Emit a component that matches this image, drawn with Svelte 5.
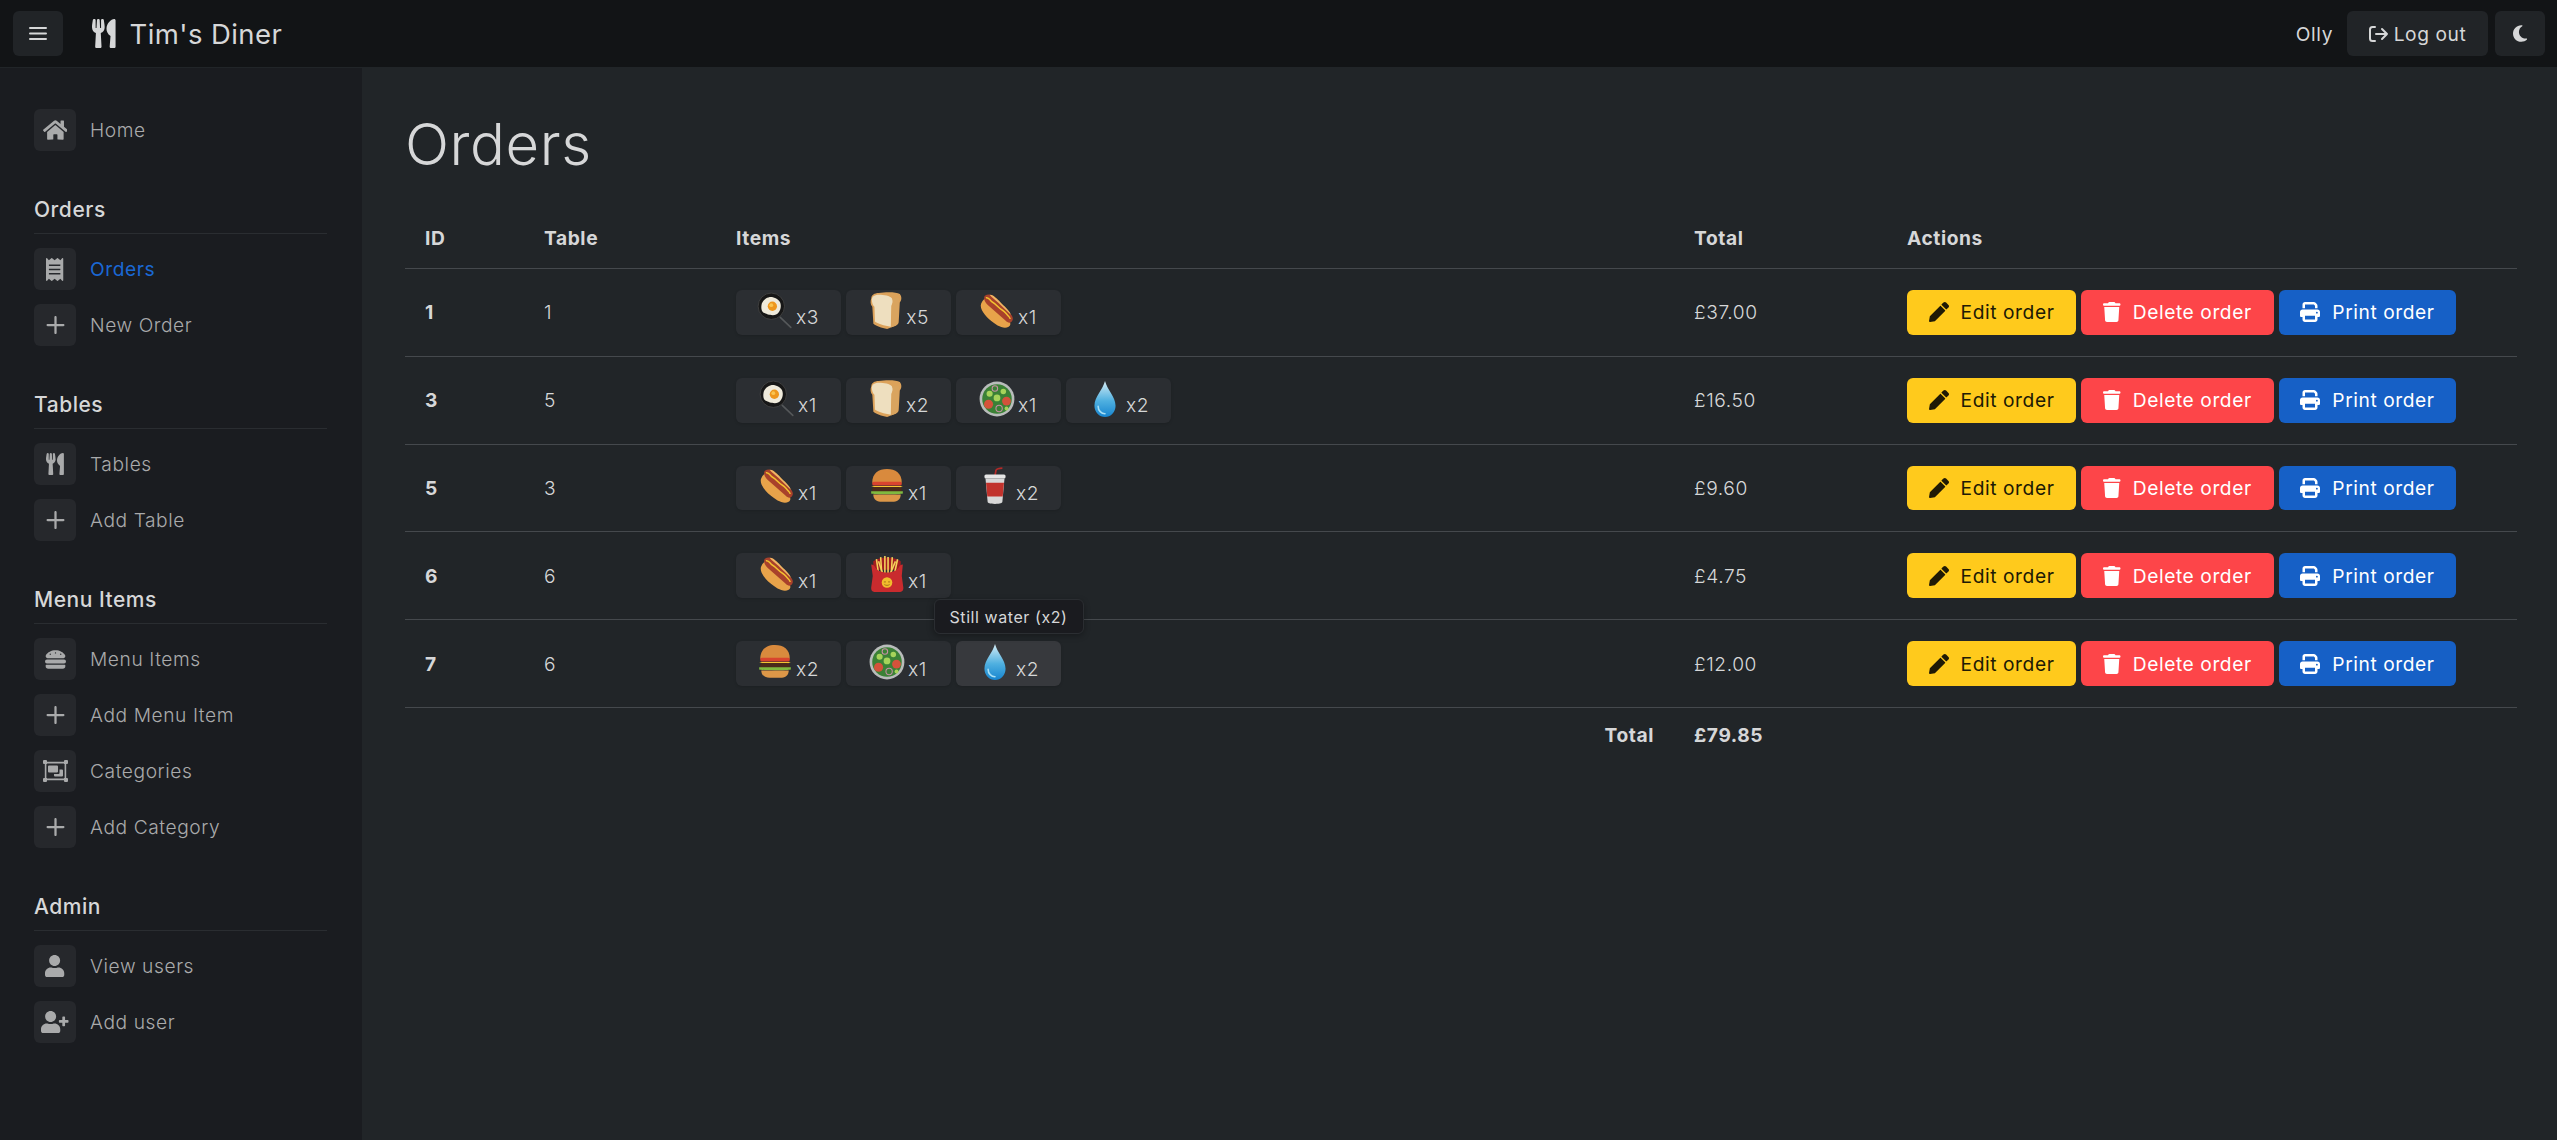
<script>
	const sections = [
		{ items: [{ label: 'Home', icon: 'home' }] },
		{
			title: 'Orders',
			items: [
				{ label: 'Orders', icon: 'receipt', active: true },
				{ label: 'New Order', icon: 'plus' }
			]
		},
		{
			title: 'Tables',
			items: [
				{ label: 'Tables', icon: 'utensils' },
				{ label: 'Add Table', icon: 'plus' }
			]
		},
		{
			title: 'Menu Items',
			items: [
				{ label: 'Menu Items', icon: 'burger' },
				{ label: 'Add Menu Item', icon: 'plus' },
				{ label: 'Categories', icon: 'group' },
				{ label: 'Add Category', icon: 'plus' }
			]
		},
		{
			title: 'Admin',
			items: [
				{ label: 'View users', icon: 'user' },
				{ label: 'Add user', icon: 'userplus' }
			]
		}
	];

	const orders = [
		{ id: 1, table: 1, total: '£37.00', items: [['egg', 3], ['bread', 5], ['hotdog', 1]] },
		{ id: 3, table: 5, total: '£16.50', items: [['egg', 1], ['bread', 2], ['salad', 1], ['water', 2]] },
		{ id: 5, table: 3, total: '£9.60', items: [['hotdog', 1], ['burger', 1], ['cup', 2]] },
		{ id: 6, table: 6, total: '£4.75', items: [['hotdog', 1], ['fries', 1]] },
		{ id: 7, table: 6, total: '£12.00', items: [['burger', 2], ['salad', 1], ['water', 2, 'Still water (x2)']] }
	];

	const iconSizes = { plus: 24, burger: 21, receipt: 23 };

	const paths = {
		home: ['0 0 576 512', 'M280.37 148.26L96 300.11V464a16 16 0 0 0 16 16l112.06-.29a16 16 0 0 0 15.92-16V368a16 16 0 0 1 16-16h64a16 16 0 0 1 16 16v95.64a16 16 0 0 0 16 16.05L464 480a16 16 0 0 0 16-16V300L295.67 148.26a12.19 12.19 0 0 0-15.3 0zM571.6 251.47L488 182.56V44.05a12 12 0 0 0-12-12h-56a12 12 0 0 0-12 12v72.61L318.47 43a48 48 0 0 0-61 0L4.34 251.47a12 12 0 0 0-1.6 16.9l25.5 31A12 12 0 0 0 45.15 301l235.22-193.74a12.19 12.19 0 0 1 15.3 0L530.9 301a12 12 0 0 0 16.9-1.6l25.5-31a12 12 0 0 0-1.7-16.93z'],
		receipt: ['0 0 384 512', 'M358.4 3.2L320 48 265.6 3.2a15.9 15.9 0 0 0-19.2 0L192 48 137.6 3.2a15.9 15.9 0 0 0-19.2 0L64 48 25.6 3.2C15-4.7 0 2.8 0 16v480c0 13.2 15 20.7 25.6 12.8L64 464l54.4 44.8a15.9 15.9 0 0 0 19.2 0L192 464l54.4 44.8a15.9 15.9 0 0 0 19.2 0L320 464l38.4 44.8c10.5 7.9 25.6.4 25.6-12.8V16c0-13.2-15-20.7-25.6-12.8zM320 360c0 4.4-3.6 8-8 8H72c-4.4 0-8-3.6-8-8v-16c0-4.4 3.6-8 8-8h240c4.4 0 8 3.6 8 8v16zm0-96c0 4.4-3.6 8-8 8H72c-4.4 0-8-3.6-8-8v-16c0-4.4 3.6-8 8-8h240c4.4 0 8 3.6 8 8v16zm0-96c0 4.4-3.6 8-8 8H72c-4.4 0-8-3.6-8-8v-16c0-4.4 3.6-8 8-8h240c4.4 0 8 3.6 8 8v16z'],
		plus: ['0 0 448 512', 'M224 64c-13 0-24 11-24 24v144H56c-13 0-24 11-24 24s11 24 24 24h144v144c0 13 11 24 24 24s24-11 24-24V280h144c13 0 24-11 24-24s-11-24-24-24H248V88c0-13-11-24-24-24z'],
		utensils: ['0 0 416 512', 'M207.9 15.2c.8 4.7 16.1 94.5 16.1 128.8 0 52.3-27.8 89.6-68.9 104.6L168 486.7c.7 13.7-10.2 25.3-24 25.3H80c-13.7 0-24.7-11.5-24-25.3l12.9-238.1C27.7 233.6 0 196.2 0 144 0 109.6 15.3 19.9 16.1 15.2 19.3-5.1 61.4-5.4 64 16.3v141.2c1.3 3.4 15.1 3.2 16 0 1.4-25.3 7.9-139.2 8-141.8 3.3-20.8 44.7-20.8 47.9 0 .2 2.7 6.6 116.5 8 141.8.9 3.2 14.8 3.4 16 0V16.3c2.6-21.6 44.8-21.4 48-1.1zm119.2 285.7l-15 185.1c-1.2 14 9.9 26 23.9 26h56c13.3 0 24-10.7 24-24V24c0-13.2-10.7-24-24-24-82.5 0-221.4 178.5-64.9 300.9z'],
		burger: ['0 0 512 512', 'M464 256H48a48 48 0 0 0 0 96h416a48 48 0 0 0 0-96zm16 128H32a16 16 0 0 0-16 16v16a64 64 0 0 0 64 64h352a64 64 0 0 0 64-64v-16a16 16 0 0 0-16-16zM58.64 224h394.72c34.57 0 54.62-43.9 34.82-75.88C448 83.2 359.55 32.1 256 32c-103.54.1-192 51.2-232.18 116.11C4 180.09 24.07 224 58.64 224zM384 112a16 16 0 1 1-16 16 16 16 0 0 1 16-16zM256 80a16 16 0 1 1-16 16 16 16 0 0 1 16-16zm-128 32a16 16 0 1 1-16 16 16 16 0 0 1 16-16z'],
		group: ['0 0 25 22', 'M0 1a1 1 0 0 1 1-1h2a1 1 0 0 1 1 1v.8h17V1a1 1 0 0 1 1-1h2a1 1 0 0 1 1 1v2a1 1 0 0 1-1 1h-.8v14h.8a1 1 0 0 1 1 1v2a1 1 0 0 1-1 1h-2a1 1 0 0 1-1-1v-.8H4v.8a1 1 0 0 1-1 1H1a1 1 0 0 1-1-1v-2a1 1 0 0 1 1-1h.8V4H1a1 1 0 0 1-1-1zm4 2.600V4h-.6v14H4v.6h17V18h.6V4H21v-.4zM6 5.500h8a1 1 0 0 1 1 1v5a1 1 0 0 1-1 1H6a1 1 0 0 1-1-1v-5a1 1 0 0 1 1-1zm10.500 4H19a1 1 0 0 1 1 1v5a1 1 0 0 1-1 1h-7a1 1 0 0 1-1-1v-1.500h4.500a1 1 0 0 0 1-1z'],
		user: ['0 0 448 512', 'M224 256c70.7 0 128-57.3 128-128S294.7 0 224 0 96 57.3 96 128s57.3 128 128 128zm89.6 32h-16.7c-22.2 10.2-46.9 16-72.9 16s-50.6-5.8-72.9-16h-16.7C60.2 288 0 348.2 0 422.4V464c0 26.5 21.5 48 48 48h352c26.5 0 48-21.5 48-48v-41.6c0-74.2-60.2-134.4-134.4-134.4z'],
		userplus: ['0 0 640 512', 'M624 208h-64v-64c0-8.8-7.2-16-16-16h-32c-8.8 0-16 7.2-16 16v64h-64c-8.8 0-16 7.2-16 16v32c0 8.8 7.2 16 16 16h64v64c0 8.8 7.2 16 16 16h32c8.8 0 16-7.2 16-16v-64h64c8.8 0 16-7.2 16-16v-32c0-8.8-7.2-16-16-16zm-400 48c70.7 0 128-57.3 128-128S294.7 0 224 0 96 57.3 96 128s57.3 128 128 128zm89.6 32h-16.7c-22.2 10.2-46.9 16-72.9 16s-50.6-5.8-72.9-16h-16.7C60.2 288 0 348.2 0 422.4V464c0 26.5 21.5 48 48 48h352c26.5 0 48-21.5 48-48v-41.6c0-74.2-60.2-134.4-134.4-134.4z'],
		pencil: ['0 0 512 512', 'M497.9 142.1l-46.1 46.1c-4.7 4.7-12.3 4.7-17 0l-111-111c-4.7-4.7-4.7-12.3 0-17l46.1-46.1c18.7-18.7 49.1-18.7 67.9 0l60.1 60.1c18.8 18.7 18.8 49.1 0 67.9zM284.2 99.8L21.6 362.4.4 483.9c-2.9 16.4 11.4 30.6 27.8 27.8l121.5-21.3 262.6-262.6c4.7-4.7 4.7-12.3 0-17l-111-111c-4.8-4.7-12.4-4.7-17.1 0z'],
		trash: ['0 0 448 512', 'M135.2 17.7L128 32H32C14.3 32 0 46.3 0 64S14.3 96 32 96H416c17.7 0 32-14.3 32-32s-14.3-32-32-32H320l-7.2-14.3C307.4 6.8 296.3 0 284.2 0H163.8c-12.1 0-23.2 6.8-28.6 17.7zM416 128H32L53.2 467c1.6 25.3 22.6 45 47.9 45H346.9c25.3 0 46.3-19.7 47.9-45L416 128z'],
		print: ['0 0 512 512', 'M128 0C92.7 0 64 28.7 64 64v96h64V64H354.7L384 93.3V160h64V93.3c0-17-6.7-33.3-18.7-45.3L400 18.7C388 6.7 371.7 0 354.7 0H128zM384 352v32 64H128V384 368 352H384zm64 32h32c17.7 0 32-14.3 32-32V256c0-35.3-28.7-64-64-64H64c-35.3 0-64 28.7-64 64v96c0 17.7 14.3 32 32 32H64v64c0 35.3 28.7 64 64 64H384c35.3 0 64-28.7 64-64V384zM432 248a24 24 0 1 1 0 48 24 24 0 1 1 0-48z'],
		moon: ['0 0 384 512', 'M223.5 32C100 32 0 132.3 0 256S100 480 223.5 480c60.6 0 115.5-24.2 155.8-63.4c5-4.9 6.3-12.5 3.1-18.7s-10.1-9.7-17-8.5c-9.8 1.7-19.8 2.6-30.1 2.6c-96.9 0-175.5-78.8-175.5-176c0-65.8 36-123.1 89.3-153.3c6.1-3.5 9.2-10.500 7.7-17.3s-7.3-11.9-14.3-12.5c-6.3-.5-12.6-.8-19-.8z']
	};
</script>

{#snippet icon(name, size)}
	<svg class="fa" viewBox={paths[name][0]} style="height: {size}px" aria-hidden="true">
		<path fill="currentColor" d={paths[name][1]} />
	</svg>
{/snippet}

{#snippet food(name)}
	<svg class="food" viewBox="0 0 34 36" aria-hidden="true">
		{#if name === 'egg'}
			<line x1="22" y1="24" x2="32" y2="33.500" stroke="#55585a" stroke-width="1.500" stroke-linecap="round" />
			<circle cx="13.500" cy="13.500" r="12.500" fill="#171717" stroke="#444" stroke-width=".8" />
			<path d="M4.500 11c2-5 7-7 10.500-6s7.500 3 7.500 8-3 9-7.500 9-5-1-8-2-3.500-5-2.500-9z" fill="#efeadb" />
			<circle cx="14.500" cy="13.500" r="4.400" fill="#ee971d" />
			<circle cx="13.500" cy="12.500" r="1.800" fill="#f9c450" />
		{:else if name === 'bread'}
			<path d="M4 6c0-3 3-5 7-5 7-1 17-1 20 1 2 2 2 6 0 8l-1 18c0 2-1 3-3 4l-8 3c-5-1-11-3-13-5l-1-16C3 12 3 9 4 6z" fill="#dca25a" />
			<path d="M4.500 7c0-3 3-4.500 7-4.500s10.500 1 12 3.500 .5 5-.500 7l-.500 20c-6-1-13-3-15-5L7 14C5 12 4.500 9 4.500 7z" fill="#eedfbf" />
			<path d="M30 10l-1 18c0 2-1 3-2 4l-4 1.500 .500-20c1-2 1.500-4 .500-7 2-1 5-1 6-.5 .500 1 .500 3 0 4z" fill="#d9a45f" />
		{:else if name === 'hotdog'}
			<path d="M2 11C0 16 6 23 11 27s12 9 17 6c2-1 2-3 1-5L12 6C8 4 4 6 2 11z" fill="#e8a34a" />
			<path d="M5.500 3.500c3-2 6.500-1.500 9.500 1.500l14 15c3 3 4 6 2 8s-4 1-6-1L8 12C5 9 4 5 5.500 3.500z" fill="#a8412b" />
			<path d="M6.500 5.500c3-1 4 3 6 4s3 2 5 4 3 3 5 4 3 3 5 5 2 3 2 3" fill="none" stroke="#f3c22f" stroke-width="1.400" />
			<path d="M10 2.500c3 0 5 2 7 4s7 7 10 10 3 5 3 5L18 10C15 7 12 5 10 2.500z" fill="#f1b562" />
		{:else if name === 'salad'}
			<circle cx="17" cy="18" r="16.500" fill="#b9bcbb" />
			<circle cx="17" cy="18" r="14" fill="#3b8136" />
			<circle cx="9" cy="23" r="4.300" fill="#d4523b" />
			<circle cx="26" cy="20" r="4.200" fill="#d4523b" />
			<circle cx="17" cy="17" r="3.200" fill="#a6d35a" />
			<circle cx="10" cy="13" r="2.900" fill="#a6d35a" />
			<circle cx="23" cy="11" r="2.600" fill="#a6d35a" />
			<circle cx="26" cy="27" r="1.800" fill="#a6d35a" />
			<circle cx="19" cy="27" r="3" fill="none" stroke="#c78fa5" stroke-width="1" />
			<circle cx="15" cy="8" r="2.600" fill="none" stroke="#c78fa5" stroke-width="1" />
		{:else if name === 'water'}
			<defs>
				<linearGradient id="drop" x1="0" y1="0" x2="0" y2="1">
					<stop offset="0" stop-color="#d5ecf5" />
					<stop offset=".55" stop-color="#4fb0e0" />
					<stop offset="1" stop-color="#1785cf" />
				</linearGradient>
			</defs>
			<path d="M17 1c2 8 10 15 10 23.500a10 10.500 0 0 1-20 0C7 16 15 9 17 1z" fill="url(#drop)" />
			<path d="M10.500 25c0 4 3 7 6.500 7" fill="none" stroke="#a9e0f5" stroke-width="1.500" stroke-linecap="round" />
		{:else if name === 'burger'}
			<path d="M3 15C3 6 9 2 17 2s14 4 14 13z" fill="#d98a3d" />
			<rect x="3" y="14" width="28" height="3.500" rx="1.500" fill="#d9442e" />
			<path d="M2 18h30l-6 3-5 1-4-1-4 1z" fill="#f4c531" />
			<rect x="3" y="19" width="28" height="5.500" rx="2.500" fill="#4a2a1a" />
			<path d="M2 23h30v2c-2 1-28 1-30 0z" fill="#7fb93f" />
			<path d="M4 26h26c0 5-4 7-8 7H12c-4 0-8-2-8-7z" fill="#dc9748" />
		{:else if name === 'cup'}
			<path d="M17 8l1-5c0-1 3-2 6-2" fill="none" stroke="#b52a28" stroke-width="1.600" />
			<rect x="7" y="7" width="20" height="4" rx="1.500" fill="#e6e6e6" />
			<path d="M8 11h18l-2 22c0 1-2 2-7 2s-7-1-7-2z" fill="#d8d8d8" />
			<path d="M8.500 15h17l-1.200 13H9.700z" fill="#c1322c" />
		{:else if name === 'fries'}
			<path d="M4 6c6-5 20-5 26 0v8H4z" fill="#a31d20" />
			<g stroke="#f6d25a" stroke-width="1.500">
				<line x1="9" y1="18" x2="7" y2="4" /><line x1="12" y1="18" x2="11" y2="2" /><line x1="15" y1="18" x2="15" y2="1" />
				<line x1="18" y1="18" x2="18" y2="2" /><line x1="21" y1="18" x2="22" y2="2" /><line x1="24" y1="18" x2="27" y2="4" />
				<line x1="13" y1="18" x2="9" y2="6" /><line x1="20" y1="18" x2="25" y2="6" />
			</g>
			<path d="M2 9c2 0 3 1 4 3 4 6 18 6 22 0 1-2 2-3 4-3l-1 11 1.500 11c.2 2-1 4-3 4H5c-2 0-3.200-2-3-4L3.500 20z" fill="#c92b2e" />
			<circle cx="17" cy="26" r="5" fill="#f2bd2c" />
			<path d="M14 25.500h2M18 25.500h2M14.500 28c1.500 1 3.500 1 5 0" stroke="#a5701b" stroke-width=".9" fill="none" />
		{/if}
	</svg>
{/snippet}

<div class="app">
	<header class="navbar">
		<button class="nav-btn menu" aria-label="Toggle menu">
			<svg viewBox="0 0 18 14" width="18" height="15"><path d="M1 1.500h16M1 7h16M1 12.500h16" stroke="currentColor" stroke-width="2" stroke-linecap="round" /></svg>
		</button>
		<span class="brand">
			{@render icon('utensils', 29)}
			Tim's Diner
		</span>
		<div class="nav-right">
			<span class="username">Olly</span>
			<button class="nav-btn logout">
				<svg viewBox="0 0 20 18" width="20" height="18" fill="none" stroke="currentColor" stroke-width="2" stroke-linecap="round" stroke-linejoin="round"><path d="M6 2H3.500C2 2 1 3 1 4.500v9C1 15 2 16 3.500 16H6M7 9h11M13 4l5 5-5 5" /></svg>
				Log out
			</button>
			<button class="nav-btn theme" aria-label="Toggle theme">{@render icon('moon', 19)}</button>
		</div>
	</header>

	<div class="body">
		<nav class="sidebar">
			{#each sections as section}
				<section class="group">
					{#if section.title}
						<h6>{section.title}</h6>
					{/if}
					<ul>
						{#each section.items as item}
							<li class:active={item.active}>
								<span class="nav-icon">{@render icon(item.icon, iconSizes[item.icon] ?? 22)}</span>
								{item.label}
							</li>
						{/each}
					</ul>
				</section>
			{/each}
		</nav>

		<main>
			<h1>Orders</h1>
			<table>
				<colgroup>
					<col style="width: 119px" /><col style="width: 192px" /><col style="width: 958px" /><col style="width: 213px" /><col />
				</colgroup>
				<thead>
					<tr><th>ID</th><th>Table</th><th>Items</th><th>Total</th><th>Actions</th></tr>
				</thead>
				<tbody>
					{#each orders as order}
						<tr>
							<td class="strong">{order.id}</td>
							<td>{order.table}</td>
							<td>
								<div class="chips">
									{#each order.items as [name, qty, tip]}
										<span class="chip" class:hover={tip}>
											{@render food(name)}
											<span class="qty">x{qty}</span>
											{#if tip}<span class="tooltip">{tip}</span>{/if}
										</span>
									{/each}
								</div>
							</td>
							<td>{order.total}</td>
							<td>
								<div class="actions">
									<button class="btn edit">{@render icon('pencil', 20)} Edit order</button>
									<button class="btn delete">{@render icon('trash', 20)} Delete order</button>
									<button class="btn print">{@render icon('print', 20)} Print order</button>
								</div>
							</td>
						</tr>
					{/each}
				</tbody>
				<tfoot>
					<tr>
						<td colspan="3" class="strong sum-label">Total</td>
						<td class="strong">£79.85</td>
						<td></td>
					</tr>
				</tfoot>
			</table>
		</main>
	</div>
</div>

<style>
	:global(body) {
		margin: 0;
		background: #212528;
		color: #d6d7d8;
		font-family: Inter, 'Liberation Sans', sans-serif;
		font-size: 19.2px;
		letter-spacing: 0.03em;
	}

	.app {
		height: 1140px;
		display: flex;
		flex-direction: column;
		overflow: hidden;
	}

	.fa {
		display: block;
		flex: none;
	}

	button {
		font: inherit;
		letter-spacing: inherit;
		border: none;
		cursor: pointer;
	}

	.navbar {
		height: 67px;
		flex: none;
		display: flex;
		align-items: center;
		padding: 0 12px 0 13px;
		background: #121416;
		border-bottom: 1px solid #212528;
	}

	.nav-btn {
		height: 45px;
		display: flex;
		align-items: center;
		justify-content: center;
		gap: 5px;
		background: #212427;
		color: #d6d7d8;
		border-radius: 6px;
	}

	.menu {
		width: 50px;
	}

	.brand {
		display: flex;
		align-items: center;
		gap: 14px;
		margin-left: 29px;
		font-size: 27.5px;
		letter-spacing: 0.015em;
	}

	.nav-right {
		margin-left: auto;
		display: flex;
		align-items: center;
		gap: 7px;
	}

	.username {
		margin-right: 7px;
	}

	.logout {
		width: 141px;
	}

	.theme {
		width: 50px;
	}

	.body {
		flex: 1;
		display: grid;
		grid-template-columns: 363px 1fr;
		min-height: 0;
	}

	.sidebar {
		background: #1a1c20;
		border-right: 1px solid #212528;
		padding: 41px 35px 0 34px;
	}

	.group + .group {
		margin-top: 44px;
	}

	h6 {
		margin: 0 0 14px;
		padding-bottom: 9px;
		border-bottom: 1px solid #2a2d31;
		font-size: 21px;
		line-height: 29px;
		font-weight: 500;
		letter-spacing: 0.025em;
		color: #d6d7d8;
	}

	ul {
		list-style: none;
		margin: 0;
		padding: 0;
		display: flex;
		flex-direction: column;
		gap: 14px;
	}

	li {
		display: flex;
		align-items: center;
		gap: 14px;
		height: 42px;
		font-weight: 300;
		color: #a9aaab;
	}

	li.active {
		color: #1a68d4;
		font-weight: 400;
	}

	.nav-icon {
		width: 42px;
		height: 42px;
		flex: none;
		display: flex;
		align-items: center;
		justify-content: center;
		background: #26282c;
		border-radius: 6px;
		color: #a9aaab;
	}

	main {
		padding: 39px 40px 0 42px;
		min-width: 0;
	}

	h1 {
		margin: 0 0 44px;
		font-size: 58px;
		line-height: 74px;
		font-weight: 300;
		letter-spacing: 0.01em;
	}

	table {
		width: 100%;
		border-collapse: collapse;
		table-layout: fixed;
		font-weight: 300;
	}

	th {
		text-align: left;
		font-weight: 700;
		padding: 0 20px;
		height: 43px;
		vertical-align: top;
		line-height: 27px;
	}

	thead tr,
	tbody tr {
		border-bottom: 1px solid #45494d;
	}

	tbody td {
		padding: 21px 20px;
		vertical-align: middle;
	}

	tfoot td {
		padding: 13px 20px;
		line-height: 28px;
	}

	.strong {
		font-weight: 700;
	}

	.sum-label {
		text-align: right;
	}

	.chips,
	.actions {
		display: flex;
		gap: 5px;
	}

	.chip {
		position: relative;
		width: 105px;
		height: 44.8px;
		display: flex;
		align-items: center;
		justify-content: center;
		gap: 4px;
		background: #2b2e32;
		border-radius: 6px;
		box-shadow: 0 1px 3px rgba(0, 0, 0, 0.15);
	}

	.chip.hover {
		background: #37393d;
	}

	.food {
		width: 36px;
		height: 38px;
		flex: none;
		margin: -3px -1px 0;
	}

	.qty {
		padding-top: 10px;
	}

	.tooltip {
		position: absolute;
		left: 50%;
		bottom: calc(100% + 7px);
		transform: translateX(-50%);
		padding: 0 15px;
		height: 33px;
		display: flex;
		align-items: center;
		white-space: nowrap;
		font-size: 16px;
		font-weight: 400;
		background: #1a1b1f;
		border: 1px solid #2b2e32;
		border-radius: 6px;
		box-shadow: 0 2px 6px rgba(0, 0, 0, 0.3);
	}

	.btn {
		height: 44.8px;
		display: flex;
		align-items: center;
		justify-content: center;
		gap: 12px;
		padding: 0;
		border-radius: 6px;
		font-weight: 400;
	}

	.edit {
		width: 169px;
		background: #ffca1c;
		color: #201a05;
	}

	.delete {
		width: 193px;
		background: #fd4549;
		color: #fff;
	}

	.print {
		width: 177px;
		background: #1660c6;
		color: #fff;
	}
</style>
